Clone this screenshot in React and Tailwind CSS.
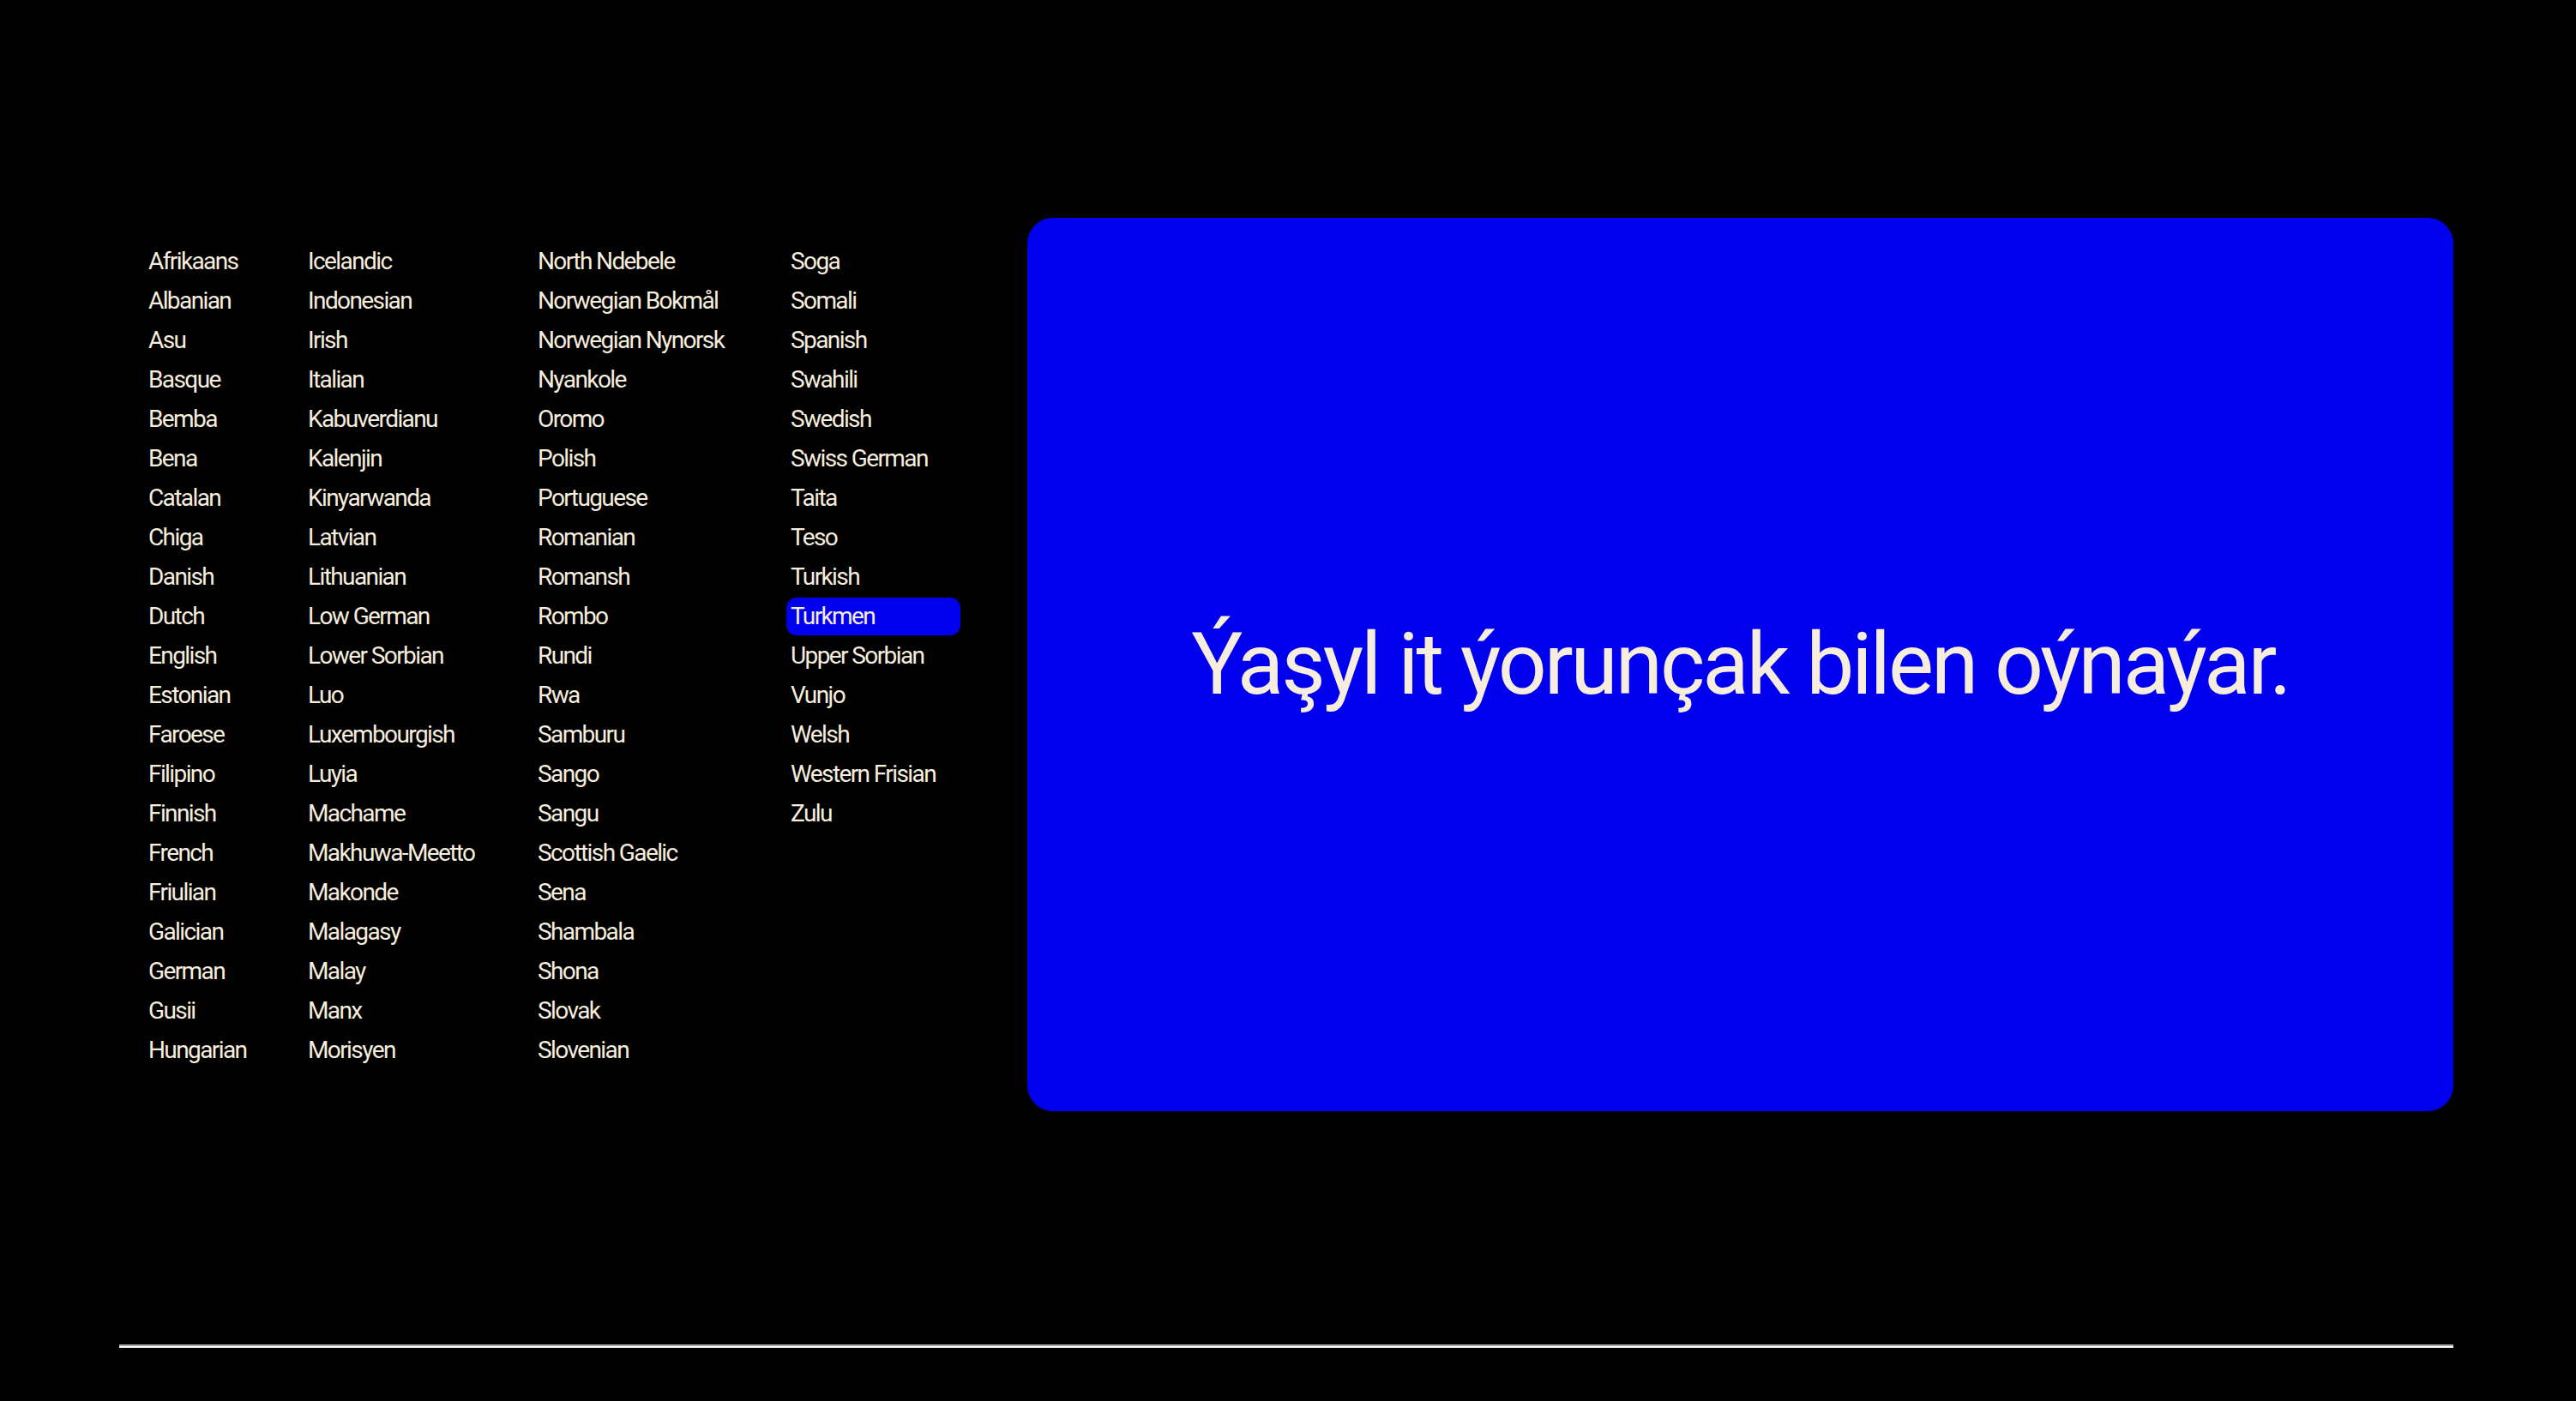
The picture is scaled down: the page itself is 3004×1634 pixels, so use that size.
import React from "react";

const columns = [
  {
    w: "w-[186px]",
    items: ["Afrikaans", "Albanian", "Asu", "Basque", "Bemba", "Bena", "Catalan", "Chiga", "Danish", "Dutch", "English", "Estonian", "Faroese", "Filipino", "Finnish", "French", "Friulian", "Galician", "German", "Gusii", "Hungarian"],
  },
  {
    w: "w-[268px]",
    items: ["Icelandic", "Indonesian", "Irish", "Italian", "Kabuverdianu", "Kalenjin", "Kinyarwanda", "Latvian", "Lithuanian", "Low German", "Lower Sorbian", "Luo", "Luxembourgish", "Luyia", "Machame", "Makhuwa-Meetto", "Makonde", "Malagasy", "Malay", "Manx", "Morisyen"],
  },
  {
    w: "w-[295px]",
    items: ["North Ndebele", "Norwegian Bokmål", "Norwegian Nynorsk", "Nyankole", "Oromo", "Polish", "Portuguese", "Romanian", "Romansh", "Rombo", "Rundi", "Rwa", "Samburu", "Sango", "Sangu", "Scottish Gaelic", "Sena", "Shambala", "Shona", "Slovak", "Slovenian"],
  },
  {
    w: "w-[203px]",
    items: ["Soga", "Somali", "Spanish", "Swahili", "Swedish", "Swiss German", "Taita", "Teso", "Turkish", "Turkmen", "Upper Sorbian", "Vunjo", "Welsh", "Western Frisian", "Zulu"],
  },
];

export default function App() {
  return (
    <div className="w-full h-[1634px] bg-black pl-[139px] pr-[143px] pt-[254px] flex flex-col font-['Roboto',sans-serif] text-[#f6eddf]">
      <div className="flex items-start h-[1042px]">
        <div className="ml-[29px] mt-[28px] flex">
          {columns.map((col, ci) => (
            <div key={ci} className={`${col.w} flex flex-col`}>
              {col.items.map((name) => (
                <div key={name} className="py-px">
                  <div
                    className={
                      name === "Turkmen"
                        ? "h-[44px] leading-[44px] px-[5px] rounded-[12px] bg-[#0000ee] text-[28px] tracking-[-1.6px] whitespace-nowrap"
                        : "h-[44px] leading-[44px] px-[5px] text-[28px] tracking-[-1.6px] whitespace-nowrap"
                    }
                  >
                    {name}
                  </div>
                </div>
              ))}
            </div>
          ))}
        </div>
        <div className="ml-[78px] flex-1 h-full rounded-[30px] bg-[#0000ee] flex items-center justify-center">
          <div className="text-[100px] leading-none tracking-[-3px] whitespace-nowrap">
            Ýaşyl it ýorunçak bilen oýnaýar.
          </div>
        </div>
      </div>
      <div className="mt-[272px] flex flex-col">
        <div className="h-[2px] bg-[#a8a8a8]"></div>
        <div className="h-[2px] bg-white"></div>
      </div>
    </div>
  );
}
